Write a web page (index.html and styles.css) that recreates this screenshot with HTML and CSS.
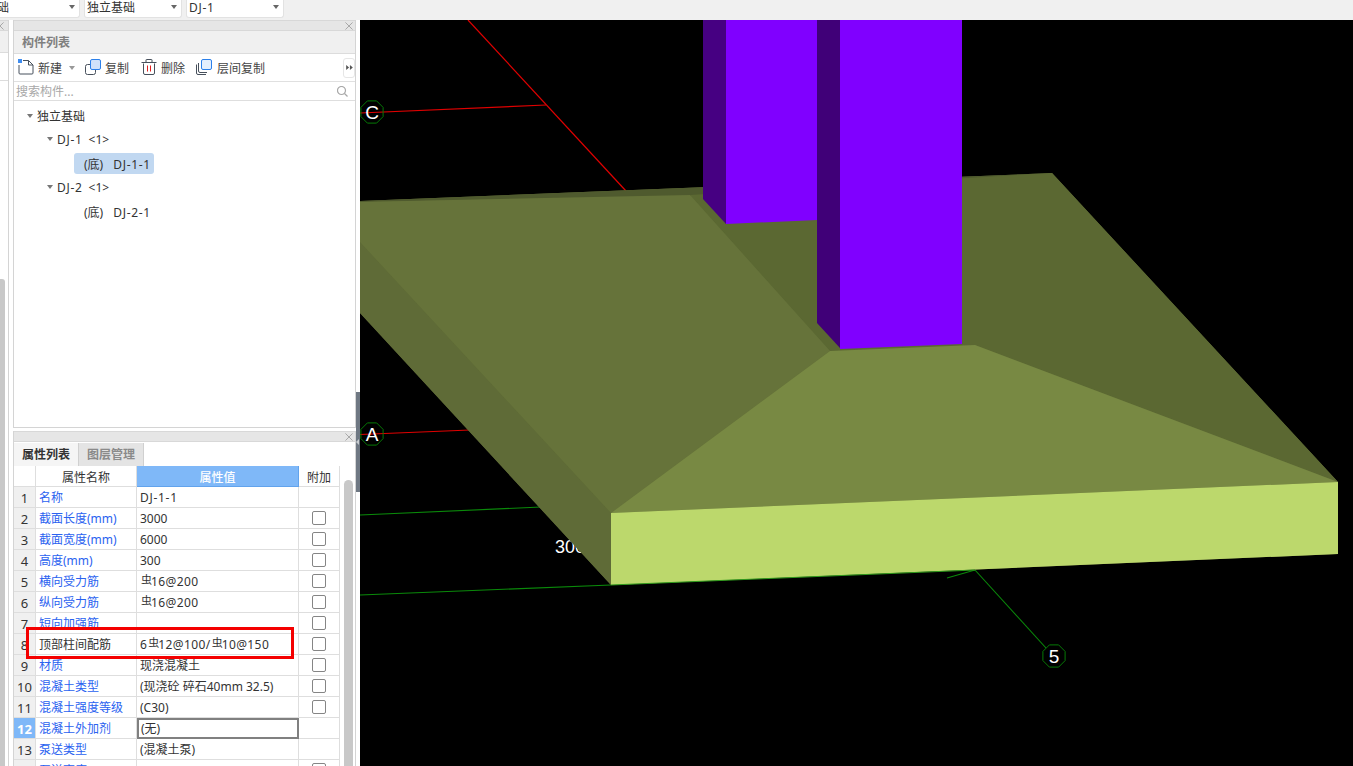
FILE: index.html
```html
<!DOCTYPE html>
<html lang="zh-CN">
<head>
<meta charset="utf-8">
<title>构件列表</title>
<link rel="stylesheet" href="styles.css">
</head>
<body>
<div class="page">
  <div class="topbar">
    <div class="select select-first"><span class="select-text">基础</span><i class="caret"></i></div>
    <div class="select"><span class="select-text">独立基础</span><i class="caret"></i></div>
    <div class="select"><span class="select-text code">DJ-1</span><i class="caret"></i></div>
  </div>
  <div class="main">
    <div class="stub">
      <div class="grip stub-grip"><svg class="close close-stub" viewBox="0 0 9 9"><path d="M0.5 0.5L8.5 8.5M8.5 0.5L0.5 8.5"/></svg></div>
      <div class="stub-head"></div>
      <div class="stub-tools"></div>
      <div class="stub-body"><div class="stub-scroll"></div></div>
    </div>
    <div class="sidebar">
      <section class="panel panel-list">
        <div class="grip"><svg class="close" viewBox="0 0 9 9"><path d="M0.5 0.5L8.5 8.5M8.5 0.5L0.5 8.5"/></svg></div>
        <div class="panel-head">构件列表</div>
        <div class="tools">
          <svg class="icon" viewBox="0 0 16 16"><path class="ln" d="M1 6V14a1 1 0 0 0 1 1H14a1 1 0 0 0 1-1V6L10.500 1.500H5"/><path class="ln" d="M10.500 1.500V6H15"/><rect class="dot" x="0" y="0" width="4" height="4"/></svg>
          <span class="tool-text">新建</span>
          <i class="caret tool-caret"></i>
          <svg class="icon icon-next" viewBox="0 0 16 16"><rect class="ln" x="0.500" y="5.500" width="10" height="10" rx="2"/><rect class="fr" x="5.500" y="0.500" width="10" height="10" rx="1.500"/></svg>
          <span class="tool-text">复制</span>
          <svg class="icon icon-next" viewBox="0 0 16 16"><path class="ln" d="M2.500 4.500V14a1.500 1.500 0 0 0 1.500 1.500H12a1.500 1.500 0 0 0 1.500-1.500V4.500M0.500 3.500H15.500M5 3.500V1a.5.5 0 0 1 .5-.5h5a.5.5 0 0 1 .5.5V3.500"/><path class="red" d="M6.500 6.500V12.500M9.500 6.500V12.500"/></svg>
          <span class="tool-text">删除</span>
          <svg class="icon icon-last" viewBox="0 0 16 16"><path class="ln" d="M0.500 5.500V14a1.500 1.500 0 0 0 1.500 1.500H10M2.500 4V12a1.500 1.500 0 0 0 1.500 1.500H11"/><rect class="fr fr-pale" x="5.500" y="0.500" width="10" height="10" rx="1.500"/></svg>
          <span class="tool-text tool-text-wide">层间复制</span>
          <div class="more"><svg class="more-icon" viewBox="0 0 8 6"><path d="M0 0L3.500 3L0 6ZM4.500 0L8 3L4.500 6Z"/></svg></div>
        </div>
        <div class="search">
          <span class="search-text">搜索构件...</span>
          <svg class="search-icon" viewBox="0 0 11 11"><circle cx="4.500" cy="4.500" r="4"/><path d="M7.500 7.500L10.500 10.500"/></svg>
        </div>
        <div class="tree">
          <div class="tree-row level-1"><i class="caret tree-caret"></i>独立基础</div>
          <div class="tree-row level-2"><i class="caret tree-caret"></i><span class="code">DJ-1</span><span class="count">&lt;1&gt;</span></div>
          <div class="tree-row level-3"><span class="leaf leaf-on"><span class="kind">(底)</span><span class="code">DJ-1-1</span></span></div>
          <div class="tree-row level-2"><i class="caret tree-caret"></i><span class="code">DJ-2</span><span class="count">&lt;1&gt;</span></div>
          <div class="tree-row level-3"><span class="leaf"><span class="kind">(底)</span><span class="code">DJ-2-1</span></span></div>
        </div>
      </section>
      <section class="panel panel-props">
        <div class="grip"><svg class="close" viewBox="0 0 9 9"><path d="M0.500 0.500L8.500 8.500M8.500 0.500L0.500 8.500"/></svg></div>
        <div class="tabs">
          <div class="tab tab-on">属性列表</div>
          <div class="tab">图层管理</div>
        </div>
        <div class="props">
          <table class="grid">
            <colgroup><col class="c-no"><col class="c-name"><col class="c-val"><col class="c-add"></colgroup>
            <thead>
              <tr><th></th><th>属性名称</th><th class="th-on">属性值</th><th>附加</th></tr>
            </thead>
            <tbody>
              <tr><td class="no">1</td><td class="name">名称</td><td class="val"><span class="code">DJ-1-1</span></td><td class="add"></td></tr>
              <tr><td class="no">2</td><td class="name">截面长度(mm)</td><td class="val">3000</td><td class="add"><i class="check"></i></td></tr>
              <tr><td class="no">3</td><td class="name">截面宽度(mm)</td><td class="val">6000</td><td class="add"><i class="check"></i></td></tr>
              <tr><td class="no">4</td><td class="name">高度(mm)</td><td class="val">300</td><td class="add"><i class="check"></i></td></tr>
              <tr><td class="no">5</td><td class="name">横向受力筋</td><td class="val val-rebar"><span class="bar">虫</span>16@200</td><td class="add"><i class="check"></i></td></tr>
              <tr><td class="no">6</td><td class="name">纵向受力筋</td><td class="val val-rebar"><span class="bar">虫</span>16@200</td><td class="add"><i class="check"></i></td></tr>
              <tr><td class="no">7</td><td class="name">短向加强筋</td><td class="val"></td><td class="add"><i class="check"></i></td></tr>
              <tr><td class="no">8</td><td class="name name-plain">顶部柱间配筋</td><td class="val val-rebar">6<span class="bar">虫</span>12@100/<span class="bar">虫</span>10@150</td><td class="add"><i class="check"></i></td></tr>
              <tr><td class="no">9</td><td class="name">材质</td><td class="val">现浇混凝土</td><td class="add"><i class="check"></i></td></tr>
              <tr><td class="no">10</td><td class="name">混凝土类型</td><td class="val">(现浇砼 碎石40mm 32.5)</td><td class="add"><i class="check"></i></td></tr>
              <tr><td class="no">11</td><td class="name">混凝土强度等级</td><td class="val">(C30)</td><td class="add"><i class="check"></i></td></tr>
              <tr><td class="no no-on">12</td><td class="name">混凝土外加剂</td><td class="val val-on">(无)</td><td class="add"></td></tr>
              <tr><td class="no">13</td><td class="name">泵送类型</td><td class="val">(混凝土泵)</td><td class="add"></td></tr>
              <tr><td class="no">14</td><td class="name">泵送高度(m)</td><td class="val"></td><td class="add"><i class="check"></i></td></tr>
            </tbody>
          </table>
          <div class="vscroll"></div>
        </div>
      </section>
    </div>
    <div class="gutter"><div class="handle"><i class="handle-arrow"></i></div></div>
    <div class="canvas">
      <svg class="scene" viewBox="360 20 993 746">
        <defs><polygon id="oct" points="4.600,-11.100 11.100,-4.600 11.100,4.600 4.600,11.100 -4.600,11.100 -11.100,4.600 -11.100,-4.600 -4.600,-11.100"/></defs>
        <line class="axis-r" x1="468" y1="20" x2="626" y2="191"/>
        <line class="axis-r" x1="360" y1="113" x2="546" y2="105"/>
        <line class="axis-r" x1="360" y1="434.500" x2="470" y2="430"/>
        <line class="axis-g" x1="360" y1="515" x2="541" y2="507"/>
        <line class="axis-g" x1="360" y1="595" x2="611" y2="585"/>
        <line class="axis-g" x1="947" y1="578" x2="975" y2="570"/>
        <line class="axis-g" x1="975" y1="570" x2="1046" y2="648"/>
        <use class="oct" href="#oct" x="372" y="112"/>
        <use class="oct" href="#oct" x="372" y="434"/>
        <use class="oct" href="#oct" x="1054" y="656"/>
        <text class="label" x="372" y="119">C</text>
        <text class="label" x="372" y="441">A</text>
        <text class="label" x="1054" y="663">5</text>
        <text class="dim" x="555" y="553">300</text>
        <polygon class="f-under" points="360,201 1052,173 1338,482 1338,554 611,585 360,313"/>
        <polygon class="f-side" points="360,242 611,513 611,585 360,313"/>
        <polygon class="f-strip" points="360,201 1052,173 692,196 360,202"/>
        <polygon class="f-back" points="690,195 1052,173 1338,482 975,345 830,351"/>
        <polygon class="f-left" points="360,202 690,195 830,351 611,513 360,242"/>
        <polygon class="f-front" points="830,351 975,345 1338,482 611,513"/>
        <polygon class="f-base" points="611,513 1338,482 1338,554 611,585"/>
        <line class="edge-g" x1="611" y1="585" x2="975" y2="570"/>
        <polygon class="c1-side" points="703,20 726,20 726,224 703,199"/>
        <polygon class="c-front" points="726,20 817,20 817,220 726,224"/>
        <polygon class="c2-side" points="817,20 840,20 840,348 817,323"/>
        <polygon class="c-front" points="840,20 962,20 962,344 840,349"/>
      </svg>
    </div>
  </div>
  <div class="callout"></div>
</div>
</body>
</html>
```

FILE: styles.css
```css
html, body {
  margin: 0;
  padding: 0;
  background: #fff;
}
.page {
  position: relative;
  width: 1353px;
  height: 766px;
  overflow: hidden;
  font: 12px/20px "Noto Sans", "Noto Sans CJK SC", sans-serif;
  color: #333;
}
i { display: block; }
.code { letter-spacing: 0.7px; }

/* top bar */
.topbar {
  display: flex;
  gap: 4px;
  height: 20px;
  background: #f0f0f0;
}
.select {
  position: relative;
  box-sizing: border-box;
  width: 98px;
  height: 18px;
  background: #fff;
  border: 1px solid #e2e2e2;
  border-top: 0;
  border-radius: 0 0 3px 3px;
  padding-left: 2px;
  line-height: 15px;
  flex: none;
}
.select-first {
  margin-left: -18px;
}
.select-text {
  display: block;
  height: 17px;
  overflow: hidden;
  font-size: 12px;
}
.caret {
  width: 0;
  height: 0;
  border-left: 3px solid transparent;
  border-right: 3px solid transparent;
  border-top: 4px solid #666;
}
.select .caret {
  position: absolute;
  right: 4px;
  top: 5px;
}

.main {
  display: flex;
  height: 746px;
}

/* cut-off neighbouring panel */
.stub {
  box-sizing: border-box;
  flex: none;
  width: 9px;
  height: 746px;
  overflow: hidden;
  border-right: 1px solid #d4d4d4;
  display: flex;
  flex-direction: column;
}
.stub-grip {
  overflow: hidden;
}
.stub-head {
  flex: none;
  box-sizing: border-box;
  height: 22px;
  background: #f0f0f0;
  border-bottom: 1px solid #dcdcdc;
}
.stub-tools {
  flex: none;
  box-sizing: border-box;
  height: 28px;
  border-bottom: 1px solid #dcdcdc;
}
.stub-body {
  flex: 1;
  min-height: 0;
}
.stub-scroll {
  width: 5px;
  height: 600px;
  margin-top: 198px;
  background: #c8c8c8;
  border-radius: 0 3px 0 0;
}

.sidebar {
  flex: none;
  width: 343px;
  margin-left: 4px;
  display: flex;
  flex-direction: column;
  gap: 3px;
}
.panel {
  box-sizing: border-box;
  border: 1px solid #d4d4d4;
  border-top: 0;
  display: flex;
  flex-direction: column;
}
.panel-list {
  height: 408px;
}
.panel-props {
  flex: 1;
  min-height: 0;
  border-bottom: 0;
  overflow: hidden;
}
.grip {
  box-sizing: border-box;
  display: flex;
  justify-content: flex-end;
  align-items: center;
  flex: none;
  height: 11px;
  background: #e6e6e6;
  border-top: 1px solid #d8d8d8;
  border-bottom: 1px solid #d8d8d8;
  padding-right: 2px;
}
.close {
  width: 8px;
  height: 8px;
  fill: none;
  stroke: #a0a0a0;
  stroke-width: 1;
}
.close-stub {
  flex: none;
  margin-right: 2px;
}
.panel-head {
  box-sizing: border-box;
  flex: none;
  height: 23px;
  padding-left: 8px;
  line-height: 24px;
  background: #f0f0f0;
  border-bottom: 1px solid #dcdcdc;
  color: #7f7f7f;
  font-weight: 700;
}

/* toolbar */
.tools {
  box-sizing: border-box;
  flex: none;
  display: flex;
  align-items: center;
  height: 28px;
  padding-left: 4px;
  border-bottom: 1px solid #e0e0e0;
}
.icon {
  flex: none;
  width: 16px;
  height: 16px;
  margin-bottom: 1px;
}
.icon-next {
  margin-left: 12px;
}
.icon-last {
  margin-left: 11px;
}
.ln {
  fill: none;
  stroke: #47505c;
  stroke-width: 1;
}
.dot { fill: #3f8df0; }
.fr {
  fill: #cfe1fa;
  stroke: #2c80ea;
  stroke-width: 1;
}
.fr-pale { fill: #e4effd; }
.red {
  fill: none;
  stroke: #e02020;
  stroke-width: 1;
}
.tool-text {
  margin-left: 4px;
  padding-top: 2px;
  color: #444;
  flex: none;
}
.tool-text-wide { margin-left: 5px; }
.tool-caret {
  flex: none;
  margin-left: 7px;
  margin-right: -2px;
  border-top-color: #999;
}
.more {
  box-sizing: border-box;
  display: flex;
  align-items: center;
  justify-content: center;
  flex: none;
  width: 12px;
  height: 20px;
  margin-left: auto;
  border: 1px solid #e6e6e6;
  border-radius: 3px;
}
.more-icon {
  width: 7px;
  height: 5px;
  fill: #555;
}

/* search */
.search {
  box-sizing: border-box;
  flex: none;
  display: flex;
  align-items: center;
  justify-content: space-between;
  height: 19px;
  padding: 0 7px 0 2px;
  border-bottom: 1px solid #dedede;
}
.search-text {
  padding-top: 2px;
  color: #a8a8a8;
}
.search-icon {
  width: 11px;
  height: 11px;
  fill: none;
  stroke: #a8a8a8;
  stroke-width: 1.200;
}

/* tree */
.tree {
  padding-top: 2px;
}
.tree-row {
  box-sizing: border-box;
  display: flex;
  align-items: center;
  height: 24px;
}
.level-1 { padding: 4px 0 0 13px; }
.level-2 { padding: 2px 0 0 33px; }
.level-3 { padding-left: 60px; }
.tree-caret {
  flex: none;
  margin: -2px 4px 0 0;
  border-top-color: #777;
}
.count {
  margin-left: 6px;
}
.leaf {
  display: block;
  height: 21px;
  line-height: 23px;
  padding: 0 3px 0 10px;
  border-radius: 3px;
}
.leaf-on {
  background: #c1d8f1;
}
.kind {
  margin-right: 10px;
}

/* tabs */
.tabs {
  flex: none;
  display: flex;
  height: 24px;
  padding-top: 1px;
  box-sizing: border-box;
}
.tab {
  box-sizing: border-box;
  width: 65px;
  height: 23px;
  line-height: 24px;
  text-align: center;
  background: #e4e4e4;
  border-right: 1px solid #d0d0d0;
  color: #8a8a8a;
  font-weight: 700;
}
.tab-on {
  background: #f5f5f5;
  color: #333;
}

/* property grid */
.props {
  display: flex;
  align-items: flex-start;
  flex: 1;
  min-height: 0;
}
.grid {
  flex: none;
  width: 326px;
  table-layout: fixed;
  border-collapse: separate;
  border-spacing: 0;
}
.c-no { width: 22px; }
.c-name { width: 101px; }
.c-val { width: 162px; }
.c-add { width: 41px; }
.grid th,
.grid td {
  box-sizing: border-box;
  height: 21px;
  padding: 2px 0 0;
  border-right: 1px solid #dedede;
  border-bottom: 1px solid #dedede;
  line-height: 18px;
  white-space: nowrap;
  overflow: hidden;
}
.grid th {
  padding-top: 4px;
  line-height: 16px;
  font-weight: 400;
  text-align: center;
}
.grid .th-on {
  background: #7fb8f8;
  color: #fff;
  font-weight: 500;
  border-color: #62a3ec;
}
.grid .no {
  background: #f0f0f0;
  text-align: center;
  font-size: 13px;
}
.grid .no-on {
  background: #7fb8f8;
  color: #fff;
  font-weight: 700;
}
.grid .name {
  padding-left: 3px;
  color: #2a62f0;
}
.grid .name-plain {
  color: #333;
}
.grid .val {
  padding-left: 3px;
}
.grid .val-rebar {
  letter-spacing: 0.4px;
}
.grid .val-on {
  border: 2px solid #808080;
  padding: 0 0 0 2px;
  line-height: 17px;
}
.grid .add {
  padding: 0;
}
.bar {
  display: inline-block;
  width: 10px;
  font-size: 11px;
  line-height: 10px;
  vertical-align: 2px;
  margin-left: 1px;
}
.check {
  box-sizing: border-box;
  width: 14px;
  height: 14px;
  margin-left: 13px;
  border: 1px solid #858585;
  border-radius: 2px;
  background: #fff;
}
.vscroll {
  flex: none;
  width: 9px;
  height: 300px;
  margin: 14px 0 0 4px;
  background: #c8c8c8;
  border-radius: 5px 5px 0 0;
}

/* gutter */
.gutter {
  flex: none;
  width: 4px;
}
.handle {
  display: flex;
  align-items: center;
  height: 100px;
  margin-top: 372px;
  background: #6f7883;
}
.handle-arrow {
  width: 0;
  height: 0;
  border-top: 3px solid transparent;
  border-bottom: 3px solid transparent;
  border-right: 3px solid #c8ccd0;
}

/* 3D canvas */
.canvas {
  flex: 1;
  min-width: 0;
  background: #000;
}
.scene {
  display: block;
  width: 993px;
  height: 746px;
}
.axis-r { stroke: #e00000; stroke-width: 1.200; }
.axis-g { stroke: #0a8a0a; stroke-width: 1.100; }
.edge-g { stroke: #2f9a1c; stroke-width: 1; }
.oct { fill: none; stroke: #067a06; stroke-width: 1; }
.label {
  font: 19px "Liberation Sans", Arial, sans-serif;
  fill: #fff;
  text-anchor: middle;
}
.dim {
  font: 18px "Liberation Sans", Arial, sans-serif;
  fill: #fff;
}
.f-under { fill: #5f6b37; }
.f-side { fill: #5f6b37; }
.f-strip { fill: #4f5a2e; }
.f-back { fill: #5b6832; }
.f-left { fill: #66733a; }
.f-front { fill: #788943; }
.f-base { fill: #bcd86c; }
.c-front { fill: #8000ff; }
.c1-side { fill: #460082; }
.c2-side { fill: #400078; }

/* red annotation laid over the grid */
.callout {
  position: absolute;
  box-sizing: border-box;
  left: 26px;
  top: 627px;
  width: 268px;
  height: 32px;
  border: 3px solid #f40000;
}
```
